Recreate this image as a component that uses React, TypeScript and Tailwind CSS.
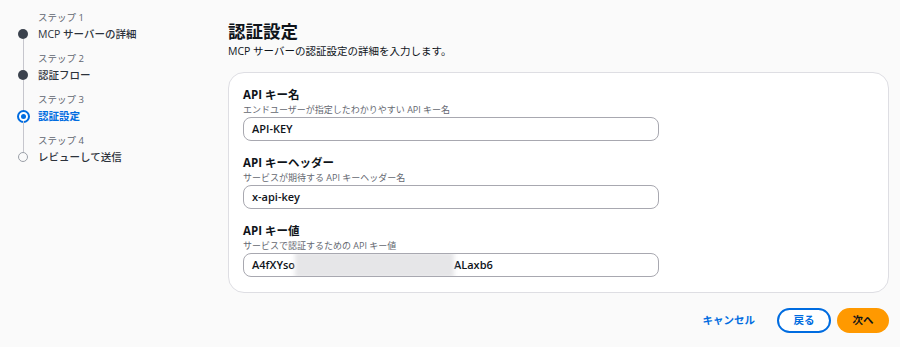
import React from 'react'

type StepState = 'done' | 'current' | 'todo'

const steps: { label: string; title: string; state: StepState }[] = [
    { label: 'ステップ 1', title: 'MCP サーバーの詳細', state: 'done' },
    { label: 'ステップ 2', title: '認証フロー', state: 'done' },
    { label: 'ステップ 3', title: '認証設定', state: 'current' },
    { label: 'ステップ 4', title: 'レビューして送信', state: 'todo' },
]

const Dot = ({ state }: { state: StepState }) => {
    if (state === 'done') {
        return <div className="w-[10px] h-[10px] rounded-full bg-[#3b424d] shrink-0" />
    }
    if (state === 'current') {
        return (
            <div className="w-[13px] h-[13px] -my-[1.5px] rounded-full border-2 border-[#006ce0] bg-white flex items-center justify-center shrink-0">
                <div className="w-[5px] h-[5px] rounded-full bg-[#006ce0]" />
            </div>
        )
    }
    return <div className="w-[10px] h-[10px] rounded-full border border-[#9ba0a8] bg-[#fafafa] shrink-0" />
}

// Left wizard navigation
const StepNav = () => (
    <nav className="w-[228px] shrink-0 pl-[18px] pt-[10px]">
        {steps.map((s, i) => (
            <div key={s.label} className="flex">
                <div className="w-[10px] flex flex-col items-center">
                    <div className={`w-px h-[19px] ${i === 0 ? '' : 'bg-[#c6c6cd]'}`} />
                    <Dot state={s.state} />
                    <div className={`w-px flex-1 ${i === steps.length - 1 ? '' : 'bg-[#c6c6cd]'}`} />
                </div>
                <div className="pl-[10px] pb-[9px]">
                    <div className="text-[9.5px] leading-[16px] text-[#5f6570]">{s.label}</div>
                    <div
                        className={`text-[10.5px] leading-[16px] ${
                            s.state === 'current' ? 'text-[#006ce0] font-bold' : 'text-[#2c323b] font-medium'
                        }`}
                    >
                        {s.title}
                    </div>
                </div>
            </div>
        ))}
    </nav>
)

const Field = ({ label, desc, children }: { label: string; desc: string; children: React.ReactNode }) => (
    <div className="flex flex-col">
        <div className="text-[11.5px] leading-[14px] font-bold text-[#0f141a]">{label}</div>
        <div className="text-[9px] leading-[12px] mt-[2px] text-[#656871]">{desc}</div>
        <div className="mt-[1px] w-[416px] h-[24px] rounded-[8px] border border-[#a8a8b0] bg-white flex items-center pl-[8px] text-[11px] font-semibold text-[#0f141a] overflow-hidden">
            {children}
        </div>
    </div>
)

export default function App() {
    return (
        <div
            className="w-[900px] h-[347px] bg-[#fafafa] flex overflow-hidden"
            style={{ fontFamily: '"Open Sans", "Noto Sans CJK JP", sans-serif' }}
        >
            <StepNav />
            <main className="w-[661px] flex flex-col pt-[20px]">
                <h1 className="text-[17.5px] leading-[22px] font-bold text-[#0f141a]">認証設定</h1>
                <p className="text-[10.5px] leading-[14px] mt-[2px] text-[#0f141a]">
                    MCP サーバーの認証設定の詳細を入力します。
                </p>
                <div className="mt-[14px] h-[221px] rounded-[16px] border border-[#dedee3] bg-white px-[14px] pt-[15px] flex flex-col gap-[15px]">
                    <Field label="API キー名" desc="エンドユーザーが指定したわかりやすい API キー名">
                        API-KEY
                    </Field>
                    <Field label="API キーヘッダー" desc="サービスが期待する API キーヘッダー名">
                        x-api-key
                    </Field>
                    <Field label="API キー値" desc="サービスで認証するための API キー値">
                        <span>A4fXYso</span>
                        <span className="w-[159px] h-[26px] shrink-0 bg-[#e6e6e8] blur-[2px]" />
                        <span>ALaxb6</span>
                    </Field>
                </div>
                <div className="mt-[15px] flex items-center justify-end">
                    <button className="text-[10.5px] font-bold text-[#006ce0] mr-[22px]">キャンセル</button>
                    <button className="w-[54px] h-[25px] rounded-full border-2 border-[#006ce0] bg-white text-[10.5px] font-bold text-[#006ce0]">
                        戻る
                    </button>
                    <button className="ml-[6px] w-[52px] h-[25px] rounded-full bg-[#ff9900] text-[10.5px] font-bold text-[#0f141a]">
                        次へ
                    </button>
                </div>
            </main>
        </div>
    )
}
